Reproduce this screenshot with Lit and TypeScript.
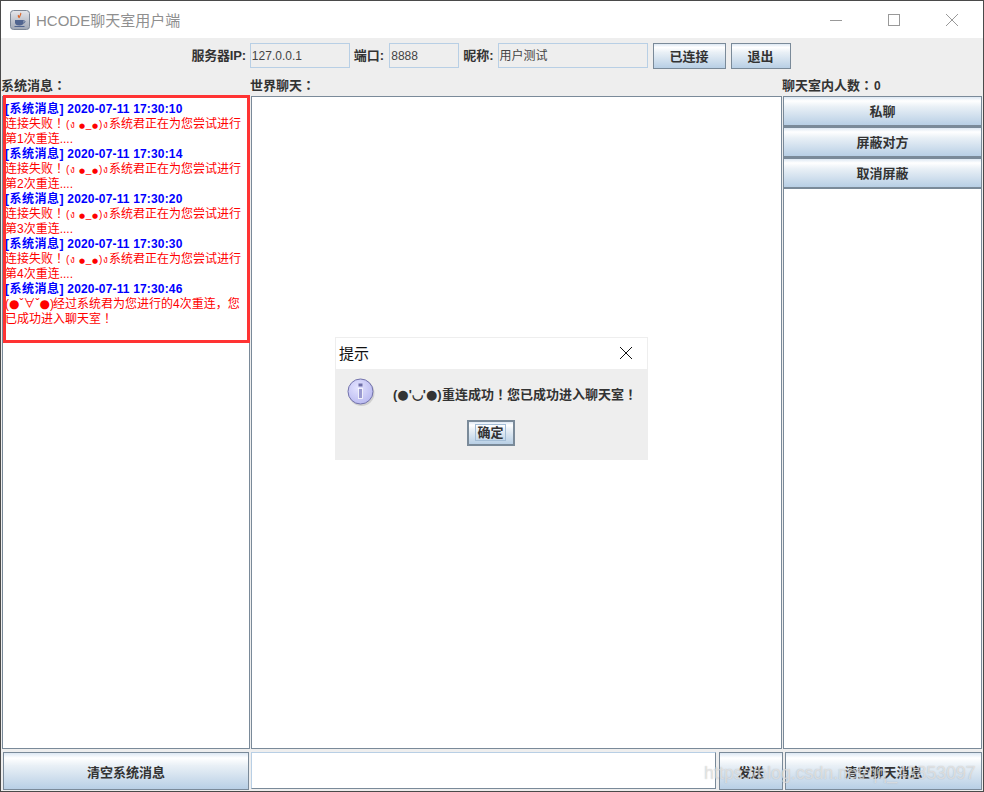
import { LitElement, html, css, unsafeCSS } from "lit";
import { customElement } from "lit/decorators.js";

const CJK = unsafeCSS(`"Liberation Sans", "Noto Sans CJK SC", sans-serif`);

const logs = [
  ["2020-07-11 17:30:10", 1],
  ["2020-07-11 17:30:14", 2],
  ["2020-07-11 17:30:20", 3],
  ["2020-07-11 17:30:30", 4],
] as const;

const FW_BANG = "\uFF01";
const FW_COLON = "\uFF1A";
const FW_COMMA = "\uFF0C";
const bang = html`<span class="tc">${FW_BANG}</span>`;
const colon = html`<span class="tc">${FW_COLON}</span>`;
const dot = html`<span class="dot">●</span>`;

@customElement("app-root")
export class AppRoot extends LitElement {
  static styles = css`
    :host {
      display: block;
      width: 984px;
      height: 792px;
      font-family: ${CJK};
      color: #333;
      font-size: 12px;
    }
    * { box-sizing: border-box; }
    .tc { font-family: "Noto Sans CJK TC", sans-serif; line-height: 0; }
    .dot { font-family: "DejaVu Sans", sans-serif; line-height: 0; }
    .window {
      position: relative;
      width: 984px;
      height: 792px;
      display: flex;
      flex-direction: column;
      background: #eeeeee;
      border: 1px solid #4a4a4a;
      overflow: hidden;
    }
    .titlebar {
      height: 37px;
      flex: none;
      background: #fff;
      display: flex;
      align-items: center;
      padding: 0 2px 0 9px;
      color: #8f8f8f;
      font-size: 15px;
    }
    .app-icon { width: 20px; height: 20px; margin-right: 6px; }
    .title { flex: 1; }
    .ctl { width: 58px; height: 37px; display: flex; align-items: center; justify-content: center; }
    .toolbar {
      height: 39px;
      flex: none;
      display: flex;
      justify-content: center;
      align-items: flex-start;
      padding: 5px 2px 0 0;
    }
    .toolbar .lbl { font-weight: 700; font-size: 13px; line-height: 26px; margin-right: 4px; white-space: nowrap; }
    .toolbar .l1 { letter-spacing: -0.2px; }
    .toolbar .l2 { margin-right: 5px; }
    .field {
      height: 25px;
      border: 1px solid #b8cfe5;
      background: #eeeeee;
      line-height: 24px;
      padding-left: 1px;
      margin-right: 4px;
      color: #444;
    }
    .f1 { width: 100px; }
    .f2 { width: 70px; }
    .f3 { width: 150px; margin-right: 5px; }
    .btn {
      border: 1px solid #7a8a99;
      background: linear-gradient(#dde8f3 0%, #fff 14%, #e9f0f6 35%, #b8cfe5 100%);
      color: #333;
      font: 700 13px ${CJK};
      display: flex;
      align-items: center;
      justify-content: center;
      padding: 0;
    }
    .b1 { width: 73px; height: 26px; margin-right: 5px; padding-bottom: 2px; }
    .b2 { width: 60px; height: 26px; padding-bottom: 2px; }
    .main {
      flex: 1;
      min-height: 0;
      display: grid;
      grid-template-columns: 249px 532px 200px;
      grid-template-rows: 19px 1fr;
    }
    .cap { font-weight: 700; font-size: 13px; line-height: 18px; white-space: nowrap; }
    .cap .n { color: #333; margin-left: 1px; font-size: 12px; }
    .panel {
      background: #fff;
      border: 1px solid #7a8a99;
      margin: 0 0 0 1px;
      min-height: 0;
    }
    .logs { padding: 5px 2px; font-size: 12px; line-height: 15px; color: #f00; }
    .logs b { color: #00f; display: block; white-space: nowrap; }
    .logs .tag { letter-spacing: 0.5px; }
    .logs .ts { letter-spacing: 0.16px; }
    .logs div { word-break: break-all; }
    .emo {
      display: inline-flex;
      justify-content: space-between;
      align-items: baseline;
      width: 44px;
      padding: 0 1px;
      white-space: nowrap;
      font-size: 10px;
      line-height: 12px;
    }
    .emo .dot { font-size: 7px; }
    .emo .gap { margin-left: 3px; }
    .emo2 { display: inline-block; width: 48px; white-space: nowrap; line-height: 12px; }
    .side { display: flex; flex-direction: column; background: #fff; border: 1px solid #7a8a99; border-top: 0; margin-left: 1px; }
    .side .btn { height: 31px; flex: none; margin: 0 -1px; border-width: 1px 1px 2px; padding-bottom: 2px; }
    .bottom {
      height: 42px;
      flex: none;
      display: grid;
      grid-template-columns: 246px 465px 65px 197px;
      column-gap: 2px;
      padding: 3px 0 1px 2px;
    }
    .bottom .btn { height: 38px; }
    .bottom .send { margin-left: 1px; }
    .bottom .input { background: #fff; border: 1px solid #7a8a99; border-top-color: #b8cfe5; border-left-color: #b8cfe5; height: 37px; margin-left: 0; }
    .annot {
      position: absolute;
      left: 2px;
      top: 94px;
      width: 247px;
      height: 248px;
      border: 3px solid #ff3333;
      pointer-events: none;
    }
    .dialog {
      position: absolute;
      left: 334px;
      top: 336px;
      width: 313px;
      height: 123px;
      background: #eeeeee;
      display: flex;
      flex-direction: column;
      border: 1px solid #eeeeee;
      border-bottom: 0;
    }
    .dlg-title {
      height: 31px;
      background: #fff;
      display: flex;
      align-items: center;
      justify-content: space-between;
      padding: 0 14px 2px 3px;
      font-size: 15px;
      color: #111;
      flex: none;
    }
    .dlg-body {
      display: flex;
      align-items: flex-start;
      padding: 9px 0 0 11px;
      height: 51px;
      flex: none;
    }
    .dlg-body svg { width: 30px; height: 30px; flex: none; }
    .dlg-msg { font-weight: 700; font-size: 13px; margin-left: 16px; line-height: 34px; white-space: nowrap; }
    .emo3 { display: inline-block; width: 49px; white-space: nowrap; line-height: 14px; }
    .dlg-foot { display: flex; justify-content: center; padding-right: 2px; }
    .ok {
      width: 48px;
      height: 26px;
      border: 2px solid #7a8a99;
      padding-bottom: 2px;
    }
    .ok span { border: 1px solid #a3bdd6; padding: 0 1px; line-height: 15px; }
    .mark {
      position: absolute;
      left: 703px;
      top: 761px;
      font-size: 17.7px;
      line-height: 22px;
      white-space: nowrap;
      color: rgba(255, 255, 255, 0.55);
      text-shadow: 0 0 1px rgba(130, 130, 130, 0.55);
      pointer-events: none;
    }
  `;

  render() {
    return html`
      <div class="window">
        <div class="titlebar">
          <svg class="app-icon" viewBox="0 0 20 20">
            <defs>
              <linearGradient id="g" x1="0" y1="0" x2="0" y2="1">
                <stop offset="0" stop-color="#e6e6ea" /><stop offset="1" stop-color="#9fa7b5" />
              </linearGradient>
            </defs>
            <rect x="0.5" y="0.5" width="19" height="19" rx="3" fill="url(#g)" stroke="#7d8796" />
            <path d="M10.5 3c1.5 1.5-2 3-.8 4.6M8.5 5c-1 1.4 1 2 .4 3" fill="none" stroke="#d9662a" stroke-width="1.2" />
            <path d="M5 10h8.5v2.5c0 2-1.5 3-4.2 3S5 14.5 5 12.5z" fill="#51658f" />
            <path d="M13.5 10.5c2 0 2 2.5-.3 2.7" fill="none" stroke="#51658f" />
            <path d="M4.5 16.5h10" stroke="#51658f" />
          </svg>
          <span class="title">HCODE聊天室用户端</span>
          <span class="ctl"><svg width="14" height="14" viewBox="0 0 14 14"><path d="M1 7.5h12" stroke="#999" /></svg></span>
          <span class="ctl"><svg width="14" height="14" viewBox="0 0 14 14"><rect x="1.5" y="1.5" width="11" height="11" fill="none" stroke="#999" /></svg></span>
          <span class="ctl"><svg width="14" height="14" viewBox="0 0 14 14"><path d="M1 1l12 12M13 1L1 13" stroke="#999" /></svg></span>
        </div>
        <div class="toolbar">
          <span class="lbl l1">服务器IP:</span><div class="field f1">127.0.0.1</div>
          <span class="lbl l2">端口:</span><div class="field f2">8888</div>
          <span class="lbl">昵称:</span><div class="field f3">用户测试</div>
          <button class="btn b1">已连接</button>
          <button class="btn b2">退出</button>
        </div>
        <div class="main">
          <div class="cap">系统消息${colon}</div>
          <div class="cap">世界聊天${colon}</div>
          <div class="cap">聊天室内人数${colon}<span class="n">0</span></div>
          <div class="panel logs">
            ${logs.map(
              ([t, n]) => html`<b><span class="tag">[系统消息]</span> <span class="ts">${t}</span></b>
                <div>连接失败${bang}<span class="emo"><span>(</span><span>ง</span><span class="dot gap">●</span><span>_</span><span class="dot">●</span><span>)</span><span>ง</span></span>系统君正在为您尝试进行第${n}次重连....</div>`
            )}
            <b><span class="tag">[系统消息]</span> <span class="ts">2020-07-11 17:30:46</span></b>
            <div><span class="emo2">(${dot}ˇ∀ˇ${dot})</span>经过系统君为您进行的4次重连${FW_COMMA}您已成功进入聊天室${bang}</div>
          </div>
          <div class="panel"></div>
          <div class="side">
            <button class="btn">私聊</button>
            <button class="btn">屏蔽对方</button>
            <button class="btn">取消屏蔽</button>
          </div>
        </div>
        <div class="bottom">
          <button class="btn">清空系统消息</button>
          <div class="input"></div>
          <button class="btn send">发送</button>
          <button class="btn">清空聊天消息</button>
        </div>
        <div class="annot"></div>
        <div class="dialog">
          <div class="dlg-title">
            <span>提示</span>
            <svg width="14" height="14" viewBox="0 0 14 14"><path d="M1 1l12 12M13 1L1 13" stroke="#111" fill="none" /></svg>
          </div>
          <div class="dlg-body">
            <svg viewBox="0 0 30 30">
              <defs>
                <radialGradient id="ig" cx="0.4" cy="0.35" r="0.7">
                  <stop offset="0" stop-color="#e4e4ff" /><stop offset="1" stop-color="#b8b8f0" />
                </radialGradient>
              </defs>
              <circle cx="14.5" cy="15" r="13" fill="#888" opacity="0.3" />
              <circle cx="13.5" cy="13.5" r="12.5" fill="url(#ig)" stroke="#7272ab" />
              <rect x="11.5" y="10.5" width="4" height="10" fill="#9a9ad0" stroke="#fff" stroke-width="0.8" />
              <rect x="11.5" y="5.5" width="4" height="3" fill="#6e6ea8" />
            </svg>
            <span class="dlg-msg"><span class="emo3">(${dot}'◡'${dot})</span>重连成功${bang}您已成功进入聊天室${bang}</span>
          </div>
          <div class="dlg-foot"><button class="btn ok"><span>确定</span></button></div>
        </div>
        <div class="mark">https://blog.csdn.net/qq_43853097</div>
      </div>
    `;
  }
}
